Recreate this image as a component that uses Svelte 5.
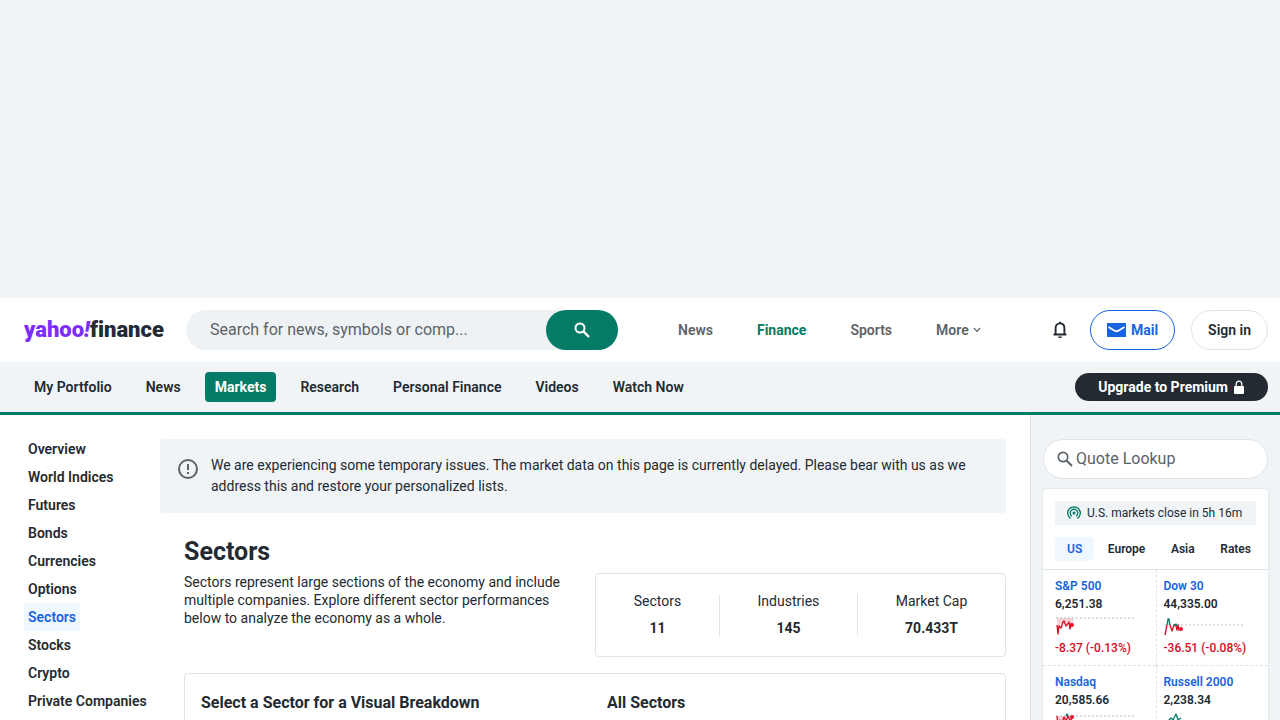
<script>
  const navLinks = ['My Portfolio', 'News', 'Markets', 'Research', 'Personal Finance', 'Videos', 'Watch Now'];
  const sideLinks = ['Overview', 'World Indices', 'Futures', 'Bonds', 'Currencies', 'Options', 'Sectors', 'Stocks', 'Crypto', 'Private Companies'];
  const stats = [
    { label: 'Sectors', value: '11' },
    { label: 'Industries', value: '145' },
    { label: 'Market Cap', value: '70.433T' }
  ];
  const regions = ['US', 'Europe', 'Asia', 'Rates'];
  const quotes = [
    { name: 'S&P 500', price: '6,251.38', change: '-8.37 (-0.13%)', base: 2, red: 'M2 9L3 18L4 10L6 12L8 6L9 5L11 10L12 9L14 6L15 13L16 8L18 9', green: '', area: 'M2 2H18V9L15 12L14 6L11 10L8 6L4 10L3 18Z', dot: 9 },
    { name: 'Dow 30', price: '44,335.00', change: '-36.51 (-0.08%)', base: 9, red: 'M1 19L3 9M6 9L8 15L10 9L12 10L13 14L14 9L15 14L18 13', green: 'M3 9L4 3L5 3L6 9M10 9L12 8L13 10', area: 'M3 9L4 3L5 3L6 9Z', dot: 13 },
    { name: 'Nasdaq', price: '20,585.66', base: 4, red: 'M2 4L3 14L5 8L7 11L9 5L11 9L13 4L15 9L18 5', green: 'M11 4L12 2L13 4', area: 'M2 4H18V6L15 9L13 4L7 11L3 14Z', dot: 5 },
    { name: 'Russell 2000', price: '2,238.34', base: 12, red: '', green: 'M4 9L7 6L9 8L12 2L14 8L17 6', area: '', dot: 0 }
  ];
</script>

<div class="ad"></div>

<header class="top">
  <a class="logo" href="#home" aria-label="yahoo!finance"><span class="brand">yahoo<i>!</i></span><span>finance</span></a>
  <form class="search">
    <input type="text" aria-label="Search" placeholder="Search for news, symbols or comp..." />
    <button type="button" aria-label="Submit search">
      <svg width="16" height="16" viewBox="0 0 16 16" fill="none" stroke="#fff" stroke-width="2"><circle cx="6" cy="6" r="4.5" /><path d="M9.4 9.4L15 15" stroke-width="2.4" /></svg>
    </button>
  </form>
  <nav class="sites" aria-label="Sites">
    <a href="#news">News</a>
    <a href="#finance" class="current">Finance</a>
    <a href="#sports">Sports</a>
    <a href="#more">More<svg width="8" height="6" viewBox="0 0 8 6" fill="none" stroke="#5b636a" stroke-width="1.2"><path d="M1 1L4 4.4L7 1" /></svg></a>
  </nav>
  <div class="account">
    <button class="bell" type="button" aria-label="Notifications">
      <svg width="16" height="18" viewBox="0 0 16 18"><path d="M3.6 12.5V7.2C3.6 4.3 5.3 2.4 8 2.4S12.4 4.3 12.4 7.2V12.5L13.7 13.5H2.3Z" fill="none" stroke="#232a31" stroke-width="1.9" stroke-linejoin="round" /><path d="M6 15.500H10C9.800 16.600 9 17 8 17S6.200 16.600 6 15.500Z" fill="#232a31" /><path d="M7 .8H9V2H7Z" fill="#232a31" /></svg>
    </button>
    <a class="pill mail" href="#mail"><svg width="19" height="14" viewBox="0 0 19 14"><path d="M0 0H19V14H0Z" fill="#1863de" /><path d="M1.500 4L7.200 7.400Q9.500 8.800 11.800 7.400L17.500 4" fill="none" stroke="#fff" stroke-width="1.800" /></svg>Mail</a>
    <a class="pill" href="#signin">Sign in</a>
  </div>
</header>

<nav class="bar" aria-label="Finance">
  {#each navLinks as link}
    <a href="#{link}" class:active={link === 'Markets'}>{link}</a>
  {/each}
  <a class="premium" href="#premium">Upgrade to Premium<svg width="12" height="15" viewBox="0 0 12 15"><rect x="1" y="6" width="10" height="8" rx="1" fill="#fff" /><path d="M3.200 7V4.200C3.200 2.400 4.300 1.200 6 1.200S8.800 2.400 8.800 4.200V7" fill="none" stroke="#fff" stroke-width="1.300" /></svg></a>
</nav>

<div class="page">
  <nav class="side" aria-label="Markets">
    {#each sideLinks as link}
      <a href="#{link}" class:active={link === 'Sectors'}>{link}</a>
    {/each}
  </nav>

  <main>
    <div class="notice">
      <svg width="22" height="22" viewBox="0 0 22 22" fill="none" stroke="#5b636a" stroke-width="2"><circle cx="11" cy="11" r="9" /><path d="M11 6V12M11 14V16" /></svg>
      <p>We are experiencing some temporary issues. The market data on this page is currently delayed. Please bear with us as we address this and restore your personalized lists.</p>
    </div>
    <div class="content">
      <h1>Sectors</h1>
      <div class="intro">
        <p>Sectors represent large sections of the economy and include multiple companies. Explore different sector performances below to analyze the economy as a whole.</p>
        <dl class="stats">
          {#each stats as stat}
            <div><dt>{stat.label}</dt><dd>{stat.value}</dd></div>
          {/each}
        </dl>
      </div>
      <section class="breakdown">
        <h2>Select a Sector for a Visual Breakdown</h2>
        <h2>All Sectors</h2>
      </section>
    </div>
  </main>

  <aside>
    <label class="lookup">
      <svg width="16" height="16" viewBox="0 0 16 16" fill="none" stroke="#5b636a" stroke-width="1.700"><circle cx="6" cy="6" r="4.700" /><path d="M9.500 9.500L15 15" stroke-width="2" /></svg>
      <input type="text" aria-label="Quote Lookup" placeholder="Quote Lookup" />
    </label>
    <section class="markets">
      <div class="status">
        <svg width="14" height="14" viewBox="0 0 14 14" fill="none" stroke="#037b66" stroke-width="1.300"><path d="M3.600 12.400A6.300 6.300 0 1 1 10.400 12.400M5 10.300A3.800 3.800 0 1 1 9 10.300" /><circle cx="7" cy="7" r="1.500" fill="#037b66" stroke="none" /></svg>
        U.S. markets close in 5h 16m
      </div>
      <div class="tabs">
        {#each regions as region}
          <button type="button" class:active={region === 'US'}>{region}</button>
        {/each}
      </div>
      <div class="quotes">
        {#each quotes as quote}
          <div class="quote">
            <a href="#{quote.name}">{quote.name}</a>
            <span>{quote.price}</span>
            <svg width="80" height="20" viewBox="0 0 80 20" fill="none">
              <path d={quote.area} fill={quote.name === 'Dow 30' ? '#b5dcd2' : '#fbd0d6'} />
              <path d="M1 {quote.base}H80" stroke="#a5adb5" stroke-width="1.200" stroke-dasharray="1.500 2.500" />
              <path d={quote.red} stroke="#d60a22" stroke-width="1.300" stroke-linejoin="round" />
              <path d={quote.green} stroke="#037b66" stroke-width="1.300" stroke-linejoin="round" />
              {#if quote.dot}<circle cx="17" cy={quote.dot} r="2" fill="#eb0f29" />{/if}
            </svg>
            {#if quote.change}<span class="change">{quote.change}</span>{/if}
          </div>
        {/each}
      </div>
    </section>
  </aside>
</div>

<style>
  :global(*) { box-sizing: border-box; }
  :global(body) { margin: 0; background: #fff; color: #232a31; font: 14px/20px Roboto, sans-serif; overflow: hidden; height: 100vh; }
  a { color: inherit; text-decoration: none; }
  button, input { font: inherit; color: inherit; border: 0; padding: 0; background: none; }
  svg { flex: none; display: block; }
  p, h1, h2, dl, dd { margin: 0; }
  .ad { height: 298px; background: #f0f4f7; }

  .top { display: flex; align-items: center; height: 64px; padding: 0 12px 0 24px; }
  .logo { display: flex; width: 162px; font-size: 22px; line-height: 24px; font-weight: 900; font-variant-ligatures: none; }
  .brand { color: #7d2eff; }
  .search { display: flex; width: 432px; height: 40px; border-radius: 20px; background: #eef2f5; }
  .search input { flex: 1; min-width: 0; padding-left: 24px; font-size: 16px; outline: 0; }
  input::placeholder { color: #5b636a; opacity: 1; }
  .search button { display: grid; place-items: center; width: 72px; border-radius: 20px; background: #037b66; }
  .sites { display: flex; gap: 44px; margin-left: 60px; font-weight: 600; color: #5b636a; }
  .sites a { display: flex; align-items: center; gap: 4px; }
  .sites .current { color: #037b66; font-weight: 700; }
  .account { display: flex; align-items: center; gap: 16px; margin-left: auto; font-weight: 600; }
  .bell { margin-right: 6px; }
  .pill { display: flex; align-items: center; gap: 5px; height: 40px; padding: 0 16px; border: 1px solid #e0e4e9; border-radius: 20px; }
  .mail { border-color: #1863de; color: #1863de; font-weight: 700; }

  .bar { display: flex; align-items: center; gap: 14px; height: 53px; padding: 0 12px 0 24px; background: #f0f4f7; border-bottom: 3px solid #037b66; font-weight: 600; }
  .bar a { padding: 5px 10px; border-radius: 4px; }
  .bar .active { background: #037b66; color: #fff; font-weight: 700; }
  .bar .premium { display: flex; align-items: center; gap: 5px; margin-left: auto; padding: 4px 23px; border-radius: 15px; background: #232a31; color: #fff; font-weight: 700; }

  .page { display: flex; }
  .side { display: flex; flex-direction: column; align-items: flex-start; width: 160px; padding: 20px 0 0 24px; font-weight: 600; }
  .side a { padding: 4px; white-space: nowrap; border-radius: 4px; }
  .side .active { background: #f0f8ff; color: #1863de; }
  main { flex: 1; min-width: 0; padding: 24px 24px 0 0; }
  .notice { display: flex; gap: 12px; padding: 16px 24px 16px 17px; border-radius: 4px; background: #f0f4f7; line-height: 21px; }
  .notice svg { margin-top: 3px; }
  .content { padding: 24px 0 0 24px; }
  h1 { font-size: 25px; line-height: 30px; font-weight: 700; }
  .intro { display: grid; grid-template-columns: 1fr 1fr; margin-top: 6px; line-height: 18px; }
  .intro p { padding-right: 24px; }
  .stats { display: flex; justify-content: space-between; height: 84px; padding: 20px 0; border: 1px solid #e0e4e9; border-radius: 4px; text-align: center; }
  .stats div { flex: 1 1 auto; padding: 0 12px; }
  .stats div + div { border-left: 1px solid #e0e4e9; }
  .stats dt { line-height: 14px; }
  .stats dd { margin-top: 11px; line-height: 18px; font-weight: 700; }
  .breakdown { display: grid; grid-template-columns: 1fr 1fr; gap: 24px; margin-top: 16px; padding: 16px; border: 1px solid #e0e4e9; border-radius: 4px; height: 200px; }
  h2 { font-size: 16px; line-height: 25px; font-weight: 700; }

  aside { width: 250px; padding: 24px 12px 0; border-left: 1px solid #e0e4e9; background: #f0f4f7; }
  .lookup { display: flex; align-items: center; gap: 3px; height: 40px; padding: 0 13px; border: 1px solid #e0e4e9; border-radius: 20px; background: #fff; font-size: 16px; }
  .lookup input { flex: 1; min-width: 0; outline: 0; }
  .markets { margin-top: 10px; padding-top: 12px; border-radius: 4px; background: #fff; box-shadow: 0 0 2px #c7cdd2; font-size: 12px; }
  .status { display: flex; align-items: center; gap: 6px; height: 24px; margin: 0 12px; padding-left: 12px; background: #f0f4f7; white-space: nowrap; }
  .tabs { display: flex; justify-content: space-between; margin: 12px 5px 8px 12px; }
  .tabs button { padding: 2px 12px; border-radius: 4px; font-weight: 600; }
  .tabs .active { background: #f0f8ff; color: #1863de; }
  .quotes { display: grid; grid-template-columns: 1fr 1fr; border-top: 1px solid #e0e4e9; }
  .quote { display: flex; flex-direction: column; height: 96px; padding: 7px 0 0 12px; border-bottom: 1px dashed #e0e4e9; font-weight: 600; line-height: 18px; white-space: nowrap; }
  .quote:nth-child(even) { padding-left: 7px; border-left: 1px dashed #e0e4e9; }
  .quote a { color: #1863de; }
  .quote svg { margin: 3px 0; }
  .quote .change { color: #d60a22; font-weight: 500; }
</style>
